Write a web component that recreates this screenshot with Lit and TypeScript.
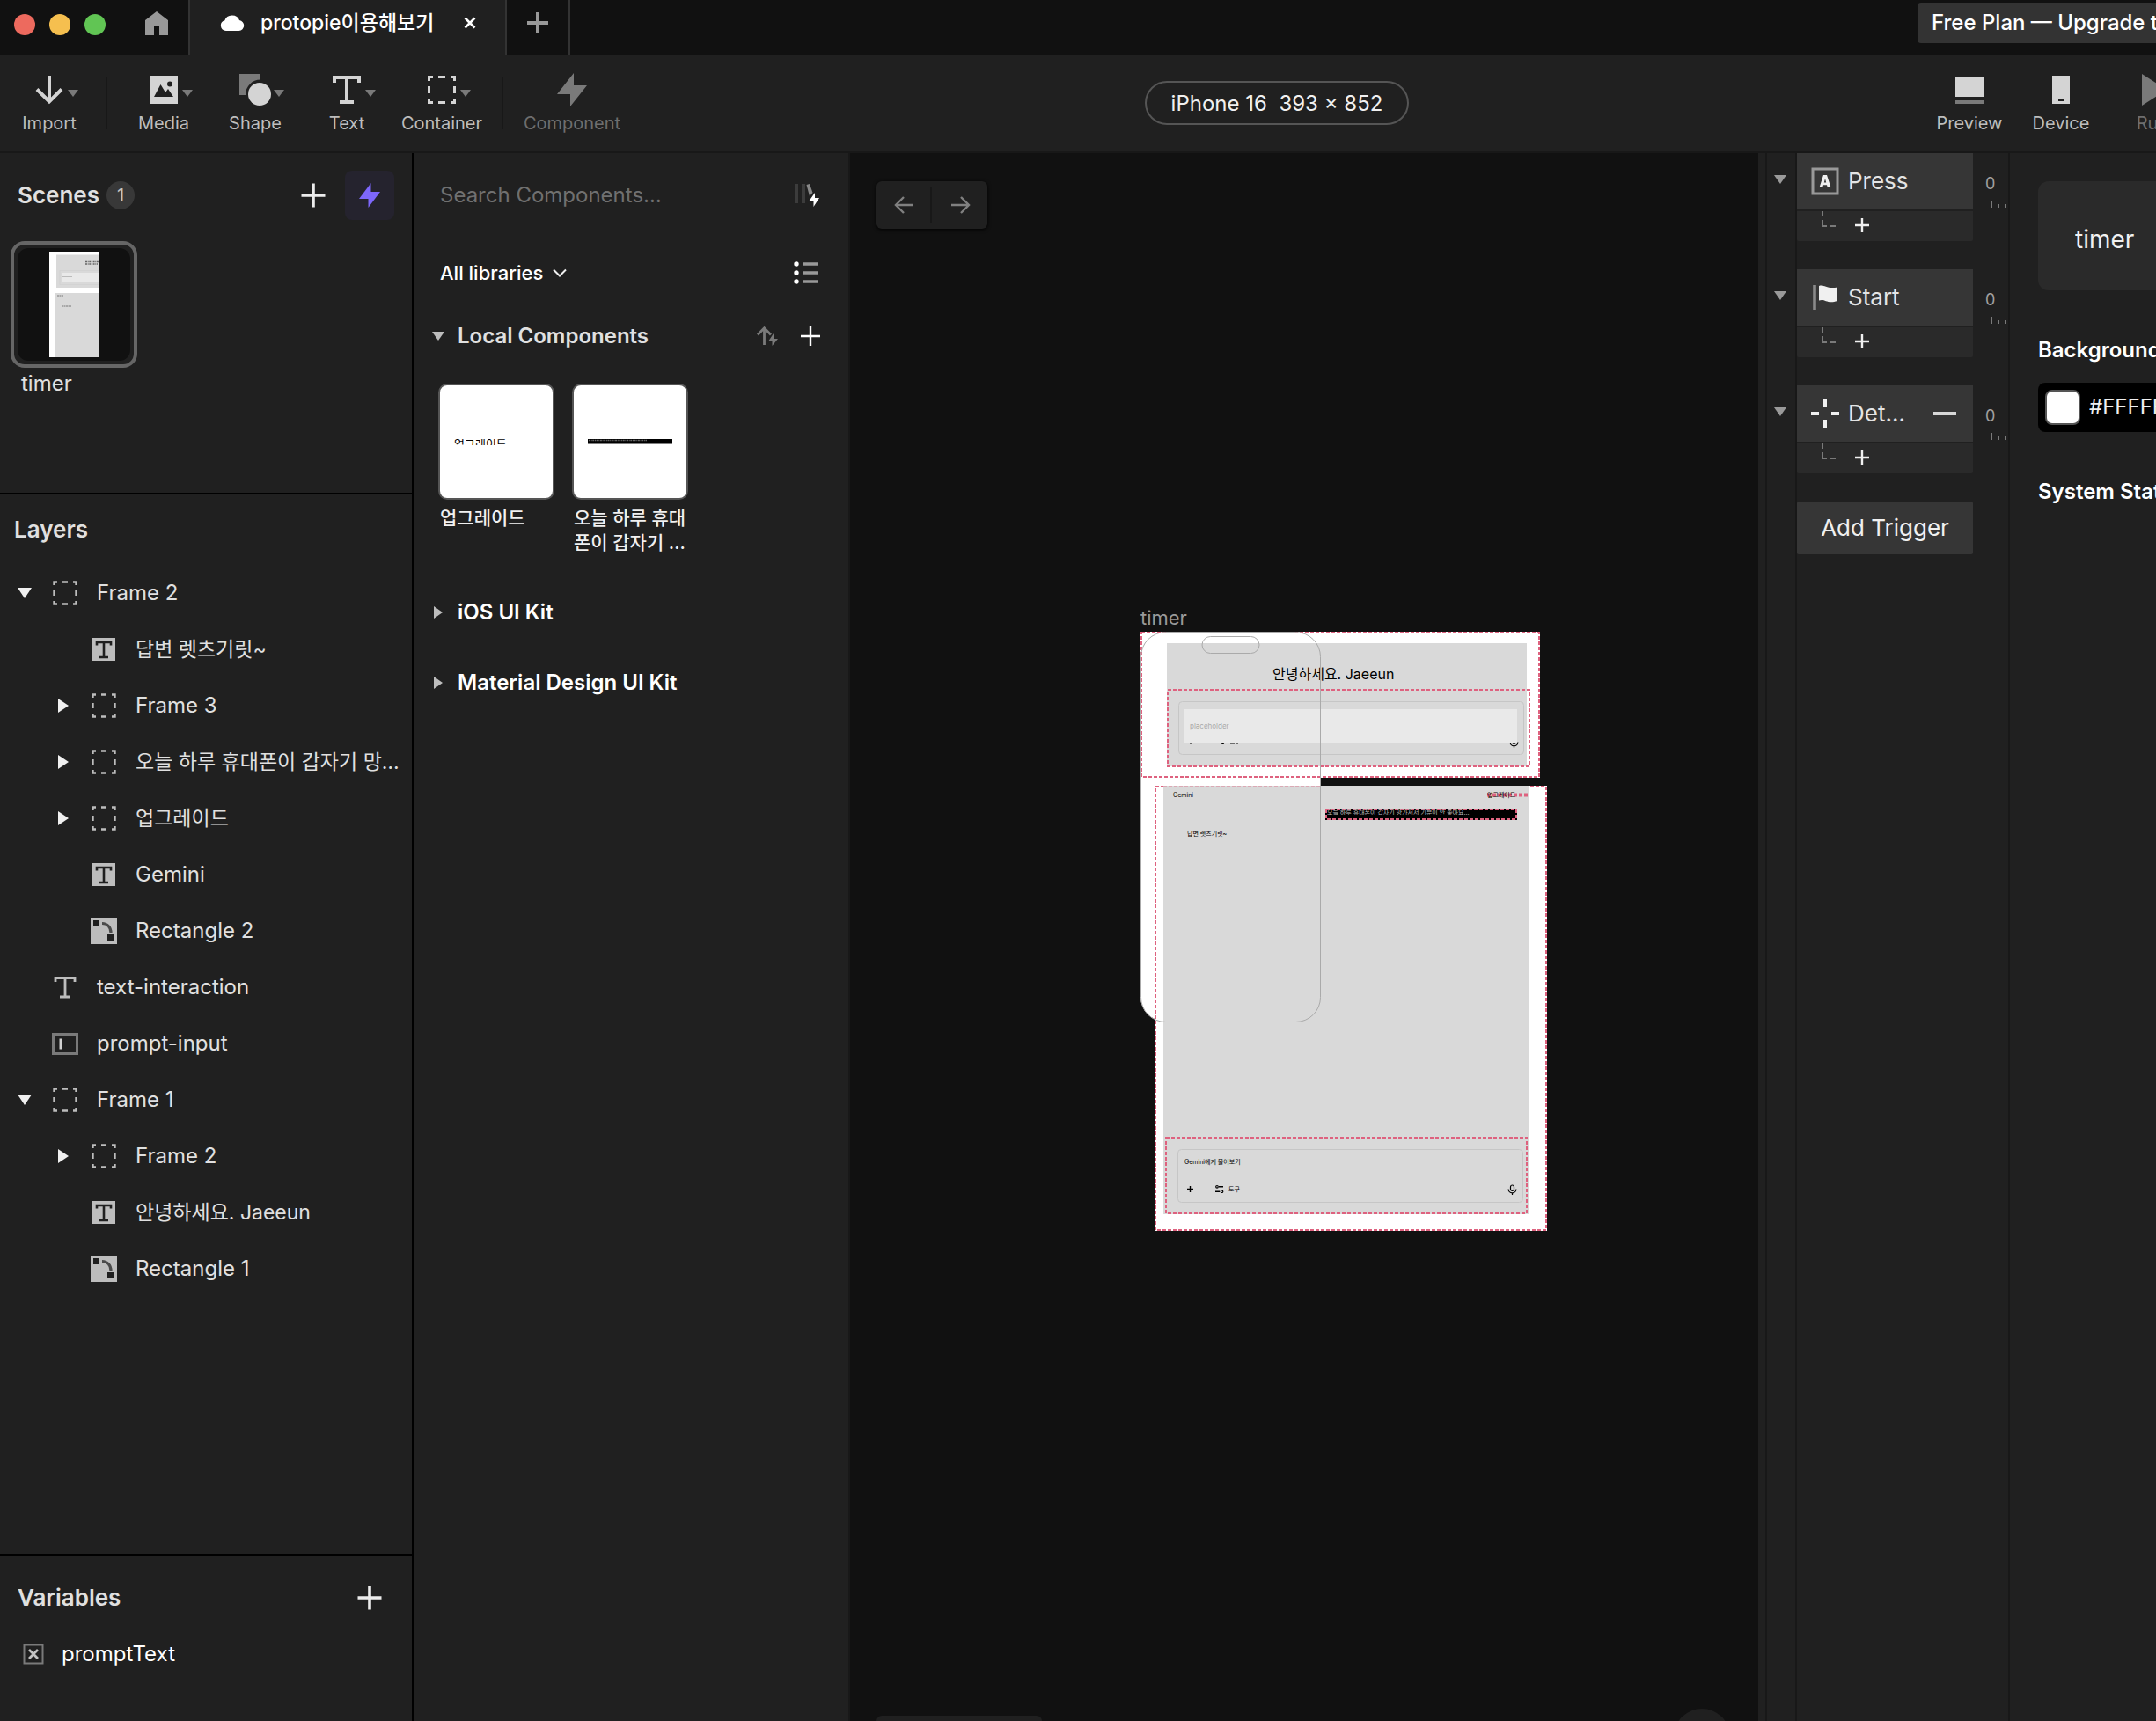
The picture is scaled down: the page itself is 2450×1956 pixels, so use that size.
import { LitElement, html, svg, css, nothing, type TemplateResult } from "lit";
import { customElement, property, state } from "lit/decorators.js";
import { classMap } from "lit/directives/class-map.js";

const ICONS: Record<string, TemplateResult> = {
  home: html`<svg width="26" height="27" viewBox="0 0 26 27"><path d="M13 0 26 10V27H16V17H10V27H0V10Z" fill="#999"/></svg>`,
  cloud: html`<svg width="28" height="18" viewBox="0 0 28 18"><path d="M7 18a6.500 6 0 0 1-1.600-11.700A8.600 7.600 0 0 1 22 6.100 6.200 6 0 0 1 21.500 18Z" fill="#fff"/></svg>`,
  close: html`<svg width="14" height="14" viewBox="0 0 14 14"><path d="M1.500 1.500 12.500 12.500M12.500 1.500 1.500 12.500" stroke="#fff" stroke-width="2.600"/></svg>`,
  import: html`<svg width="36" height="36" viewBox="0 0 36 36"><path d="M18 2V32M4 17.500 18 31.500 32 17.500" fill="none" stroke="#d4d4d4" stroke-width="4"/></svg>`,
  media: html`<svg width="36" height="36" viewBox="0 0 36 36"><path d="M2 2H34V34H2Z" fill="#d4d4d4"/><path d="M7 26 14.500 12 20 21 23 17 29 26Z" fill="#202020"/><circle cx="25" cy="11.500" r="3" fill="#202020"/></svg>`,
  shape: html`<svg width="36" height="36" viewBox="0 0 36 36"><path d="M0 0H24V6.500A17 17 0 0 0 7 24H0Z" fill="#7a7a7a"/><circle cx="23" cy="23" r="13" fill="#d4d4d4"/></svg>`,
  text: html`<svg width="36" height="36" viewBox="0 0 36 36"><path d="M4 10V4H32V10M18 4V32M10 32H26" fill="none" stroke="#d4d4d4" stroke-width="4"/></svg>`,
  container: html`<svg width="36" height="36" viewBox="0 0 36 36"><path d="M3.500 8V3.500H8M14 3.500H22M28 3.500H32.500V8M32.500 14V22M32.500 28V32.500H28M22 32.500H14M8 32.500H3.500V28M3.500 22V14" fill="none" stroke="#d4d4d4" stroke-width="3"/></svg>`,
  component: html`<svg width="34" height="38" viewBox="0 0 34 38"><path d="M19 0V14H34L15 38V24H0Z" fill="#7a7a7a"/></svg>`,
  preview: html`<svg width="36" height="36" viewBox="0 0 36 36"><path d="M2 4H34V26H2Z" fill="#d4d4d4"/><path d="M2 30H34V34H2Z" fill="#7a7a7a"/></svg>`,
  device: html`<svg width="36" height="36" viewBox="0 0 36 36"><path d="M8 2H28V34H8Z" fill="#d4d4d4"/><path d="M15 28H21V31H15Z" fill="#202020"/></svg>`,
  run: html`<svg width="36" height="36" viewBox="0 0 36 36"><path d="M6 0 34 18 6 36Z" fill="#7a7a7a"/></svg>`,
  down: html`<svg width="12" height="8" viewBox="0 0 12 8"><path d="M0 0H12L6 8Z" fill="#7a7a7a"/></svg>`,
  plusLarge: html`<svg width="28" height="28" viewBox="0 0 28 28"><path d="M14 .5V27.500M.5 14H27.500" stroke="#ececec" stroke-width="3.600"/></svg>`,
  plusTab: html`<svg width="24" height="24" viewBox="0 0 24 24"><path d="M12 0V24M0 12H24" stroke="#999" stroke-width="4"/></svg>`,
  plusThin: html`<svg width="22" height="22" viewBox="0 0 22 22"><path d="M11 0V22M0 11H22" stroke="#fff" stroke-width="2.400"/></svg>`,
  plusSmall: html`<svg width="16" height="16" viewBox="0 0 16 16"><path d="M8 0V16M0 8H16" stroke="#f0f0f0" stroke-width="2.400"/></svg>`,
  boltPurple: html`<svg width="24" height="28" viewBox="0 0 24 28"><path d="M13.500 0V10H24L10.500 28V18H0Z" fill="#7d67fb"/></svg>`,
  library: html`<svg width="30" height="26" viewBox="0 0 30 26"><path d="M1 0H5V22H1ZM9 0H13V22H9Z" fill="#3c3c3c"/><path d="M14.500 1 18 0 21.500 10 18 14Z" fill="#888"/><path d="M24 10V16H29L22.500 26V20H17Z" fill="#fff"/></svg>`,
  chevron: html`<svg width="16" height="10" viewBox="0 0 16 10"><path d="M1 1.500 8 8.500 15 1.500" fill="none" stroke="#f0f0f0" stroke-width="2"/></svg>`,
  list: html`<svg width="28" height="26" viewBox="0 0 28 26"><g fill="#fff"><circle cx="3" cy="3" r="2.700"/><circle cx="3" cy="13" r="2.700"/><circle cx="3" cy="23" r="2.700"/></g><path d="M10 3H28M10 13H28M10 23H28" stroke="#999" stroke-width="3.600"/></svg>`,
  publish: html`<svg width="24" height="22" viewBox="0 0 24 22"><path d="M8.500 21V2M1 9.500 8.500 1.800 16 9.500" fill="none" stroke="#7a7a7a" stroke-width="2.800"/><path d="M19 8V14H24L17.500 22V17H13Z" fill="#7a7a7a"/></svg>`,
  back: html`<svg width="22" height="20" viewBox="0 0 22 20"><path d="M11 1 2 10 11 19M2 10H22" fill="none" stroke="#808080" stroke-width="2.400"/></svg>`,
  forward: html`<svg width="22" height="20" viewBox="0 0 22 20"><path d="M11 1 20 10 11 19M20 10H0" fill="none" stroke="#808080" stroke-width="2.400"/></svg>`,
  variable: html`<svg width="24" height="24" viewBox="0 0 24 24"><path d="M1.500 1.500H22.500V22.500H1.500Z" fill="none" stroke="#7a7a7a" stroke-width="2"/><path d="M7 7 17 17M17 7 7 17" stroke="#c4c4c4" stroke-width="2.800"/></svg>`,
  press: html`<svg width="32" height="32" viewBox="0 0 32 32"><path d="M2 2H30V30H2Z" fill="none" stroke="#999" stroke-width="3"/><path fill-rule="evenodd" d="M14 9H18L22.500 23H18.800L18 20.300H14L13.200 23H9.500ZM14.800 17.500H17.200L16 13Z" fill="#f0f0f0"/></svg>`,
  start: html`<svg width="32" height="32" viewBox="0 0 32 32"><path d="M4 2V30" stroke="#8a8a8a" stroke-width="3.600"/><path d="M9 3C15 1 18 7 30 4.500V20C18 24 16 17 9 19.500Z" fill="#f0f0f0"/></svg>`,
  detect: html`<svg width="32" height="32" viewBox="0 0 32 32"><path d="M16 0V9M16 23V32M0 16H9M23 16H32" stroke="#f0f0f0" stroke-width="4"/></svg>`,
  minus: html`<svg width="26" height="4" viewBox="0 0 26 4"><path d="M0 2H26" stroke="#d8d8d8" stroke-width="4"/></svg>`,
  branch: html`<svg width="18" height="20" viewBox="0 0 18 20"><path d="M2 0V6M2 10V17H7M11 17H17" fill="none" stroke="#7a7a7a" stroke-width="2"/></svg>`,
  ruler: html`<svg width="20" height="8" viewBox="0 0 20 8"><path d="M1 0V8M9 4V8M17 4V8" stroke="#7a7a7a" stroke-width="2"/></svg>`,
  frame: html`<svg width="32" height="32" viewBox="0 0 32 32"><path d="M3.500 7V3.500H7M13 3.500H19M25 3.500H28.500V7M28.500 13V19M28.500 25V28.500H25M19 28.500H13M7 28.500H3.500V25M3.500 19V13" fill="none" stroke="#bdbdbd" stroke-width="2.400"/></svg>`,
  label: html`<svg width="32" height="32" viewBox="0 0 32 32"><path d="M5 10V5.500H27V10M16 5.500V27M10 27H22" fill="none" stroke="#bdbdbd" stroke-width="2.800"/></svg>`,
  labelFill: html`<svg width="32" height="32" viewBox="0 0 32 32"><path d="M3 3H29V29H3Z" fill="#bdbdbd"/><path d="M8 11.500V8H24V11.500M16 8V25M11 25H21" fill="none" stroke="#202020" stroke-width="2.600"/></svg>`,
  input: html`<svg width="32" height="32" viewBox="0 0 32 32"><path d="M2.500 5.500H29.500V27.500H2.500Z" fill="none" stroke="#7a7a7a" stroke-width="3"/><path d="M11 10.500V22.500" stroke="#d0d0d0" stroke-width="3"/></svg>`,
  rect: html`<svg width="32" height="32" viewBox="0 0 32 32"><path d="M1 1H31V31H1Z" fill="#bdbdbd"/><path d="M4 4H11V11H4ZM20 20H27V27H20Z" fill="#202020"/><path d="M14 7.500C20 7.500 24 12 24 18" fill="none" stroke="#4a4a4a" stroke-width="3.200"/></svg>`,
};

const caret = (open: boolean, size: "s" | "m" | "l") => {
  const [w, h, fill] = size === "l" ? [16, 12, "#f0f0f0"] : size === "m" ? [14, 10, "#bdbdbd"] : [14, 10, "#9a9a9a"];
  return open
    ? html`<svg width=${w} height=${h} viewBox="0 0 16 12" preserveAspectRatio="none"><path d="M0 0H16L8 12Z" fill=${fill} /></svg>`
    : html`<svg width=${h} height=${w} viewBox="0 0 12 16" preserveAspectRatio="none"><path d="M0 0 12 8 0 16Z" fill=${fill} /></svg>`;
};

const base = css`
  * { box-sizing: border-box; }
  button, input, select { font: inherit; color: inherit; background: none; border: 0; padding: 0; margin: 0; outline: none; }
  button { display: flex; align-items: center; justify-content: center; cursor: pointer; }
  h2, h3, ul, p { margin: 0; padding: 0; font: inherit; list-style: none; }
  svg { display: block; flex: none; }
`;

interface Tool { icon: string; label: string; menu?: boolean; off?: boolean; size?: "wide" | "widest"; }

@customElement("tool-button")
class ToolButton extends LitElement {
  @property({ attribute: false }) tool!: Tool;
  static styles = [base, css`
    :host { display: block; }
    .tool { flex-direction: column; width: 104px; height: 110px; gap: 4px; color: #bdbdbd; font-size: 20px; line-height: 28px; padding-top: 2px; }
    .wide { width: 112px; }
    .widest { width: 132px; }
    .off { color: #6e6e6e; }
    .pic { display: flex; align-items: center; justify-content: center; height: 40px; position: relative; }
    .menu { position: absolute; left: 100%; top: 20px; margin-left: 3px; }
  `];
  render() {
    const { icon, label, menu, off, size } = this.tool;
    return html`<button class=${classMap({ tool: true, off: !!off, wide: size === "wide", widest: size === "widest" })} ?disabled=${off}>
      <span class="pic">${ICONS[icon]}${menu ? html`<span class="menu">${ICONS.down}</span>` : nothing}</span>
      <span>${label}</span>
    </button>`;
  }
}

interface Layer { name: string; icon: string; depth: number; open?: boolean; }

const LAYERS: Layer[] = [
  { name: "Frame 2", icon: "frame", depth: 0, open: true },
  { name: "답변 렛츠기릿~", icon: "labelFill", depth: 1 },
  { name: "Frame 3", icon: "frame", depth: 1, open: false },
  { name: "오늘 하루 휴대폰이 갑자기 망…", icon: "frame", depth: 1, open: false },
  { name: "업그레이드", icon: "frame", depth: 1, open: false },
  { name: "Gemini", icon: "labelFill", depth: 1 },
  { name: "Rectangle 2", icon: "rect", depth: 1 },
  { name: "text-interaction", icon: "label", depth: 0 },
  { name: "prompt-input", icon: "input", depth: 0 },
  { name: "Frame 1", icon: "frame", depth: 0, open: true },
  { name: "Frame 2", icon: "frame", depth: 1, open: false },
  { name: "안녕하세요. Jaeeun", icon: "labelFill", depth: 1 },
  { name: "Rectangle 1", icon: "rect", depth: 1 },
];

const hasHangul = (s: string) => /[가-힣]/.test(s);

@customElement("scene-sidebar")
class SceneSidebar extends LitElement {
  static styles = [base, css`
    :host { display: flex; flex-direction: column; background: #202020; border-right: 2px solid #000; min-height: 0; font-size: 24px; line-height: 32px; color: #e0e0e0; }
    .scenes { height: 388px; border-bottom: 2px solid #000; flex: none; }
    .head { display: flex; align-items: center; height: 96px; padding: 0 20px; gap: 8px; }
    .title { font-size: 26px; font-weight: 600; }
    .count { width: 32px; height: 32px; border-radius: 16px; background: #383838; font-size: 20px; text-align: center; color: #c4c4c4; }
    .push { margin-left: auto; }
    .add { width: 56px; height: 56px; }
    .accent { width: 56px; height: 56px; border-radius: 8px; background: #25232e; }
    .scene { display: flex; flex-direction: column; align-items: flex-start; padding: 4px 12px; gap: 2px; }
    .thumb { width: 144px; height: 144px; border: 4px solid #666; border-radius: 16px; padding: 4px; }
    .shot { display: flex; align-items: center; justify-content: center; width: 128px; height: 128px; border-radius: 12px; background: #111; }
    .name { padding-left: 12px; }
    .layers { flex: 1; min-height: 0; }
    .layers .head { height: 80px; padding: 0 16px; }
    .row { display: flex; align-items: center; height: 64px; padding-left: 16px; white-space: nowrap; }
    .row.deep { padding-left: 60px; }
    .caret { width: 24px; height: 32px; flex: none; margin-right: 18px; }
    .row .label { margin-left: 20px; }
    .ko { font-size: 23px; }
    .vars { height: 190px; border-top: 2px solid #000; flex: none; }
    .vars .var { display: flex; align-items: center; gap: 20px; height: 32px; padding-left: 26px; color: #fff; }
  `];
  render() {
    return html`
      <section class="scenes">
        <div class="head"><h2 class="title">Scenes</h2><span class="count">1</span>
          <button class="add push" aria-label="Add scene">${ICONS.plusLarge}</button>
          <button class="accent" aria-label="Components">${ICONS.boltPurple}</button></div>
        <div class="scene">
          <button class="thumb" aria-label="timer scene"><span class="shot">
            <svg width="56" height="120" viewBox="0 0 56 120">
              <path d="M0 0H56V120H0Z" fill="#fff"/><path d="M8 3.500H56V41H8ZM7 47H56V120H7Z" fill="#d9d9d9"/>
              <path d="M14 24H56V34H14Z" fill="#e9e9e9"/><path d="M12 21.500H56M12 21.500V37.500H56" fill="none" stroke="#cfcfcf" stroke-width=".6"/>
              <path d="M41 11.500H56M41 14H55" stroke="#666" stroke-width="1.400" stroke-dasharray="2 .7 1 .6"/>
              <path d="M15 28.500H26" stroke="#bbb"/><path d="M9 50H16M14 62H25" stroke="#777" stroke-dasharray="2 .5"/>
              <path d="M15 34.500H17M23 34.500H31" stroke="#555" stroke-dasharray="2 1"/>
            </svg></span></button>
          <span class="name">timer</span>
        </div>
      </section>
      <section class="layers">
        <div class="head"><h2 class="title">Layers</h2></div>
        <ul>${LAYERS.map((l) => html`<li class=${classMap({ row: true, deep: l.depth > 0 })}>
          ${l.open === undefined ? html`<span class="caret"></span>` : html`<button class="caret" aria-label="Toggle">${caret(l.open, "l")}</button>`}
          ${ICONS[l.icon]}<span class=${classMap({ label: true, ko: hasHangul(l.name) })}>${l.name}</span></li>`)}</ul>
      </section>
      <section class="vars">
        <div class="head"><h2 class="title">Variables</h2><button class="add push" aria-label="Add variable">${ICONS.plusLarge}</button></div>
        <div class="var">${ICONS.variable}<span>promptText</span></div>
      </section>`;
  }
}

@customElement("component-library")
class ComponentLibrary extends LitElement {
  static styles = [base, css`
    :host { display: block; background: #202020; border-right: 2px solid #181818; font-size: 24px; line-height: 32px; color: #fff; padding-left: 21px; padding-right: 32px; }
    .bar { display: flex; align-items: center; justify-content: space-between; height: 96px; padding-left: 9px; }
    .bar button { width: 30px; justify-content: flex-start; }
    .search { flex: 1; min-width: 0; }
    .search::placeholder { color: #707070; opacity: 1; }
    .filter { height: 80px; font-size: 22px; }
    .pick { display: flex; align-items: center; gap: 10px; font-weight: 500; }
    .pick select { appearance: none; }
    .group { display: flex; align-items: center; height: 80px; }
    .group.first { height: 64px; }
    .group h3 { font-weight: 600; }
    .first h3 { color: #e0e0e0; }
    .caret { width: 14px; height: 32px; margin-right: 15px; }
    .actions { display: flex; gap: 26px; margin-left: auto; }
    .cards { display: grid; grid-template-columns: repeat(auto-fill, 132px); gap: 20px; padding: 22px 0 20px 7px; }
    .card { display: flex; flex-direction: column; gap: 7px; height: 200px; }
    .tile { width: 132px; height: 132px; border: 2px solid #555; border-radius: 10px; background: #fff; }
    .card p { font-size: 21px; font-weight: 500; line-height: 28px; padding-left: 2px; height: 56px; white-space: pre-line; color: #f0f0f0; }
  `];
  render() {
    return html`
      <div class="bar"><input class="search" type="text" aria-label="Search Components" placeholder="Search Components…" /><button aria-label="Libraries">${ICONS.library}</button></div>
      <div class="bar filter">
        <label class="pick"><select aria-label="Library"><option>All libraries</option></select>${ICONS.chevron}</label>
        <button aria-label="List view">${ICONS.list}</button>
      </div>
      <div class="group first"><button class="caret" aria-label="Toggle">${caret(true, "m")}</button><h3>Local Components</h3>
        <div class="actions"><button aria-label="Publish">${ICONS.publish}</button><button aria-label="Add component">${ICONS.plusThin}</button></div></div>
      <div class="cards">
        <div class="card"><button class="tile" aria-label="업그레이드">
          <svg width="128" height="128" viewBox="0 0 128 128"><clipPath id="u"><path d="M0 61H128V68H0Z"/></clipPath><text clip-path="url(#u)" x="16" y="71" font-size="13" font-family="'Noto Sans CJK KR', sans-serif">업그레이드</text></svg></button><p>업그레이드</p></div>
        <div class="card"><button class="tile" aria-label="오늘 하루 휴대폰이 갑자기">
          <svg width="128" height="128" viewBox="0 0 128 128"><path d="M16 61H112V66.500H16Z"/><path d="M17 62.500H83" stroke="#666" stroke-width="1.400" stroke-dasharray="2 .7 1 .6"/></svg></button><p>${"오늘 하루 휴대\n폰이 갑자기 …"}</p></div>
      </div>
      <div class="group"><button class="caret" aria-label="Toggle">${caret(false, "m")}</button><h3>iOS UI Kit</h3></div>
      <div class="group"><button class="caret" aria-label="Toggle">${caret(false, "m")}</button><h3>Material Design UI Kit</h3></div>`;
  }
}

@customElement("scene-canvas")
class SceneCanvas extends LitElement {
  static styles = [base, css`
    :host { display: block; position: relative; background: #111; overflow: hidden; }
    .history { position: absolute; left: 30px; top: 32px; display: grid; grid-template-columns: 61px 65px; border-radius: 6px; background: #202020; height: 54px; align-items: center; box-shadow: 0 1px 4px #000; }
    .history button { height: 42px; }
    .history button + button { border-left: 2px solid #181818; padding-left: 2px; }
    .artboard { position: absolute; left: 330px; top: 512px; color: #999; font-size: 22px; line-height: 32px; }
    .zoom { position: absolute; left: 30px; bottom: -48px; width: 188px; height: 54px; border-radius: 6px; background: #202020; }
    .help { position: absolute; right: 32px; bottom: -50px; width: 64px; height: 64px; border-radius: 32px; background: #202020; }
    text { font-family: Inter, "Noto Sans CJK KR", sans-serif; font-size: 7px; }
    .greet { font-size: 16px; }
    .hint { font-size: 8px; fill: #aaa; }
    .said { fill: #bbb; }
    .sel { fill: none; stroke: #de627f; stroke-width: 2; stroke-dasharray: 4 2; }
    .line { stroke-width: 4; }
    .faint { stroke-width: 1; opacity: 0.4; }
    .edge { fill: none; stroke: #aaa; }
    .soft { fill: none; stroke: #c6c6c6; }
  `];
  render() {
    const mic = svg`<rect x="3" y="0" width="4" height="6.500" rx="2" fill="none" stroke="#000" stroke-width="1.200"/><path d="M.6 4.500a4.400 4.400 0 0 0 8.800 0M5 9V11" fill="none" stroke="#000" stroke-width="1.200"/>`;
    const tune = svg`<path d="M4 1.800H9M0 7.200H5" stroke="#000" stroke-width="1.400"/><circle cx="2" cy="1.800" r="1.300" fill="none" stroke="#000" stroke-width="1.200"/><circle cx="7.500" cy="7.200" r="1.300" fill="none" stroke="#000" stroke-width="1.200"/>`;
    return html`
      <div class="history"><button aria-label="Back">${ICONS.back}</button><button aria-label="Forward">${ICONS.forward}</button></div>
      <div class="artboard"><span>timer</span>
        <svg width="464" height="682" viewBox="0 0 464 682">
          <path d="M0 0H205V443H28A28 28 0 0 1 0 415Z" fill="#fff"/>
          <path d="M0 0H454V166H0Z" fill="#fff"/>
          <path d="M30 13H439V153H30Z" fill="#d9d9d9"/>
          <text class="greet" x="150" y="54">안녕하세요. Jaeeun</text>
          <rect class="soft" x="43.500" y="79.500" width="392" height="60" rx="4"/>
          <g transform="translate(419.500 121)">${mic}</g><g transform="translate(86 119)">${tune}</g>
          <path d="M57 125V128M102 127H107M110 125V128" stroke="#000"/>
          <path d="M50 88H428V126H50Z" fill="#e9e9e9"/>
          <text class="hint" x="56" y="110">placeholder</text>
          <rect class="sel" x="31" y="66" width="411" height="87"/>
          <path class="sel" d="M1 1H453V165H1Z"/>
          <path d="M16 175H462V681H16Z" fill="#fff"/>
          <path class="sel" d="M17 176H461V680H17Z"/>
          <path d="M26 175H442V662H26Z" fill="#d9d9d9"/>
          <path class="sel faint" d="M26 175.500H205"/>
          <text x="37" y="188">Gemini</text>
          <path class="sel line" d="M394 185.500H442"/>
          <text x="394" y="188">업그레이드</text>
          <path d="M210 201H428V214H210Z"/>
          <clipPath id="bubble"><path d="M210 202H428V208H210Z"/></clipPath>
          <path class="sel" d="M211 202H427V213H211Z"/>
          <text class="said" clip-path="url(#bubble)" x="212" y="208">오늘 하루 휴대폰이 갑자기 망가져서 기분이 안 좋아요…</text>
          <text x="53" y="232">답변 렛츠기릿~</text>
          <rect class="soft" x="42.500" y="588.500" width="392" height="60" rx="4"/>
          <text x="50" y="605">Gemini에게 물어보기</text>
          <path d="M56.500 630V637M53 633.500H60" stroke="#000" stroke-width="1.400"/>
          <g transform="translate(85 629)">${tune}</g><text x="100" y="636">도구</text>
          <g transform="translate(417.500 629)">${mic}</g>
          <path class="sel" d="M29 575H439V661H29Z"/>
          <rect class="edge" x=".5" y=".5" width="204" height="443" rx="28"/>
          <rect class="edge" x="70" y="5.500" width="65" height="19" rx="9.500"/>
        </svg></div>
      <button class="zoom" aria-label="Zoom"></button><button class="help" aria-label="Help"></button>`;
  }
}

@customElement("trigger-panel")
class TriggerPanel extends LitElement {
  @state() private triggers = [
    { icon: "press", name: "Press", removable: false },
    { icon: "start", name: "Start", removable: false },
    { icon: "detect", name: "Det…", removable: true },
  ];
  static styles = [base, css`
    :host { display: grid; grid-template-columns: 10px 34px 200px 1fr; background: #202020; border-right: 2px solid #181818; font-size: 26px; line-height: 32px; color: #e4e4e4; }
    .grip, .carets { border-right: 2px solid #181818; }
    .carets, .list, .times { display: flex; flex-direction: column; gap: 32px; }
    .carets button { height: 100px; padding: 0 3px 40px 0; }
    .head { display: flex; align-items: center; height: 64px; padding: 0 19px 0 16px; gap: 10px; background: #363636; margin-bottom: 2px; }
    .head button { margin-left: auto; height: 32px; }
    .sub { display: flex; height: 34px; background: #2a2a2a; padding-left: 27px; gap: 21px; border-radius: 0 0 2px 2px; }
    .sub button { height: 32px; }
    .add { height: 60px; background: #363636; border-radius: 2px; color: #f0f0f0; }
    .time { height: 100px; padding: 25px 0 0 14px; font-size: 18px; line-height: 20px; color: #a0a0a0; }
    .time svg { margin: 9px 0 0 6px; }
  `];
  render() {
    return html`
      <div class="grip"></div>
      <div class="carets">${this.triggers.map(() => html`<button aria-label="Toggle">${caret(true, "s")}</button>`)}</div>
      <div class="list">${this.triggers.map((t) => html`<div>
          <div class="head">${ICONS[t.icon]}<span>${t.name}</span>${t.removable ? html`<button aria-label="Remove">${ICONS.minus}</button>` : nothing}</div>
          <div class="sub">${ICONS.branch}<button aria-label="Add response">${ICONS.plusSmall}</button></div></div>`)}
        <button class="add">Add Trigger</button></div>
      <div class="times">${this.triggers.map(() => html`<div class="time">0${ICONS.ruler}</div>`)}</div>`;
  }
}

@customElement("scene-properties")
class SceneProperties extends LitElement {
  static styles = [base, css`
    :host { display: block; background: #202020; color: #fff; font-size: 24px; line-height: 32px; padding: 32px 0 0 32px; overflow: hidden; white-space: nowrap; }
    .name { display: block; width: 100%; height: 124px; padding: 8px 0 0 42px; border-radius: 12px 0 0 12px; background: #2a2a2a; font-size: 28px; line-height: 36px; color: #f0f0f0; }
    .title { display: block; font-weight: 600; margin: 52px 0 21px; }
    .color { display: flex; align-items: center; gap: 10px; height: 56px; padding-left: 8px; border-radius: 8px 0 0 8px; background: #000; }
    .color input { width: 0; flex: 1; color: #f0f0f0; }
    .swatch { width: 40px; height: 40px; border-radius: 8px; border: 2px solid #555; background: #fff; flex: none; }
  `];
  render() {
    return html`<input class="name" type="text" aria-label="Scene name" value="timer" />
      <label class="title" for="bg">Background</label>
      <div class="color"><button class="swatch" aria-label="Pick color"></button><input id="bg" type="text" value="#FFFFFF" /></div>
      <h2 class="title">System Status</h2>`;
  }
}

@customElement("app-root")
class AppRoot extends LitElement {
  private create: Tool[] = [
    { icon: "media", label: "Media", menu: true }, { icon: "shape", label: "Shape", menu: true },
    { icon: "text", label: "Text", menu: true }, { icon: "container", label: "Container", menu: true, size: "wide" },
  ];
  private share: Tool[] = [
    { icon: "preview", label: "Preview" }, { icon: "device", label: "Device" }, { icon: "run", label: "Run", off: true },
  ];
  static styles = [base, css`
    :host { display: grid; grid-template-rows: 62px 112px 1fr; height: 100vh; overflow: hidden; background: #111; font-family: Inter, "Noto Sans CJK KR", sans-serif; color: #fff; }
    .titlebar { display: flex; min-width: 0; font-size: 24px; line-height: 28px; }
    .lights { display: flex; gap: 16px; padding: 16px 0 0 16px; }
    .light { width: 24px; height: 24px; border-radius: 12px; }
    .red { background: #ed6a5e; } .amber { background: #f5bf4f; } .green { background: #61c554; }
    .home { width: 94px; height: 53px; padding-left: 22px; }
    .tab { display: flex; align-items: center; width: 362px; padding: 0 33px 10px 34px; background: #202020; border: solid #333; border-width: 0 2px; font-size: 23px; font-weight: 500; }
    .tab span { margin: 0 auto 0 18px; }
    .new { width: 72px; padding-bottom: 10px; border-right: 2px solid #333; }
    .plan { width: 271px; height: 46px; margin: 3px 0 0 auto; padding-left: 16px; background: #333; border-radius: 4px 0 0 4px; overflow: hidden; white-space: nowrap; font-weight: 500; justify-content: flex-start; }
    .toolbar { display: flex; align-items: center; justify-content: space-between; background: #202020; border-bottom: 2px solid #181818; min-width: 0; }
    .tools { display: flex; align-items: center; }
    .left { padding-left: 4px; }
    .right { margin-right: -48px; }
    .rule { width: 2px; height: 60px; background: #181818; margin: 0 12px; }
    .device { height: 50px; padding: 0 28px; border: 2px solid #555; border-radius: 25px; font-size: 24px; color: #f0f0f0; white-space: pre; }
    .workspace { display: grid; grid-template-columns: 470px 496px 1fr 286px 166px; min-height: 0; }
  `];
  render() {
    const tools = (list: Tool[]) => list.map((t) => html`<tool-button .tool=${t}></tool-button>`);
    return html`
      <header class="titlebar">
        <div class="lights"><span class="light red"></span><span class="light amber"></span><span class="light green"></span></div>
        <button class="home" aria-label="Home">${ICONS.home}</button>
        <div class="tab">${ICONS.cloud}<span>protopie이용해보기</span><button aria-label="Close tab">${ICONS.close}</button></div>
        <button class="new" aria-label="New tab">${ICONS.plusTab}</button>
        <button class="plan">Free Plan — Upgrade to</button>
      </header>
      <nav class="toolbar">
        <div class="tools left">${tools([{ icon: "import", label: "Import", menu: true }])}<span class="rule"></span>${tools(this.create)}<span class="rule"></span>
          ${tools([{ icon: "component", label: "Component", off: true, size: "widest" }])}</div>
        <button class="device">${"iPhone 16  393 × 852"}</button>
        <div class="tools right">${tools(this.share)}</div>
      </nav>
      <main class="workspace">
        <scene-sidebar></scene-sidebar><component-library></component-library><scene-canvas></scene-canvas>
        <trigger-panel></trigger-panel><scene-properties></scene-properties>
      </main>`;
  }
}
